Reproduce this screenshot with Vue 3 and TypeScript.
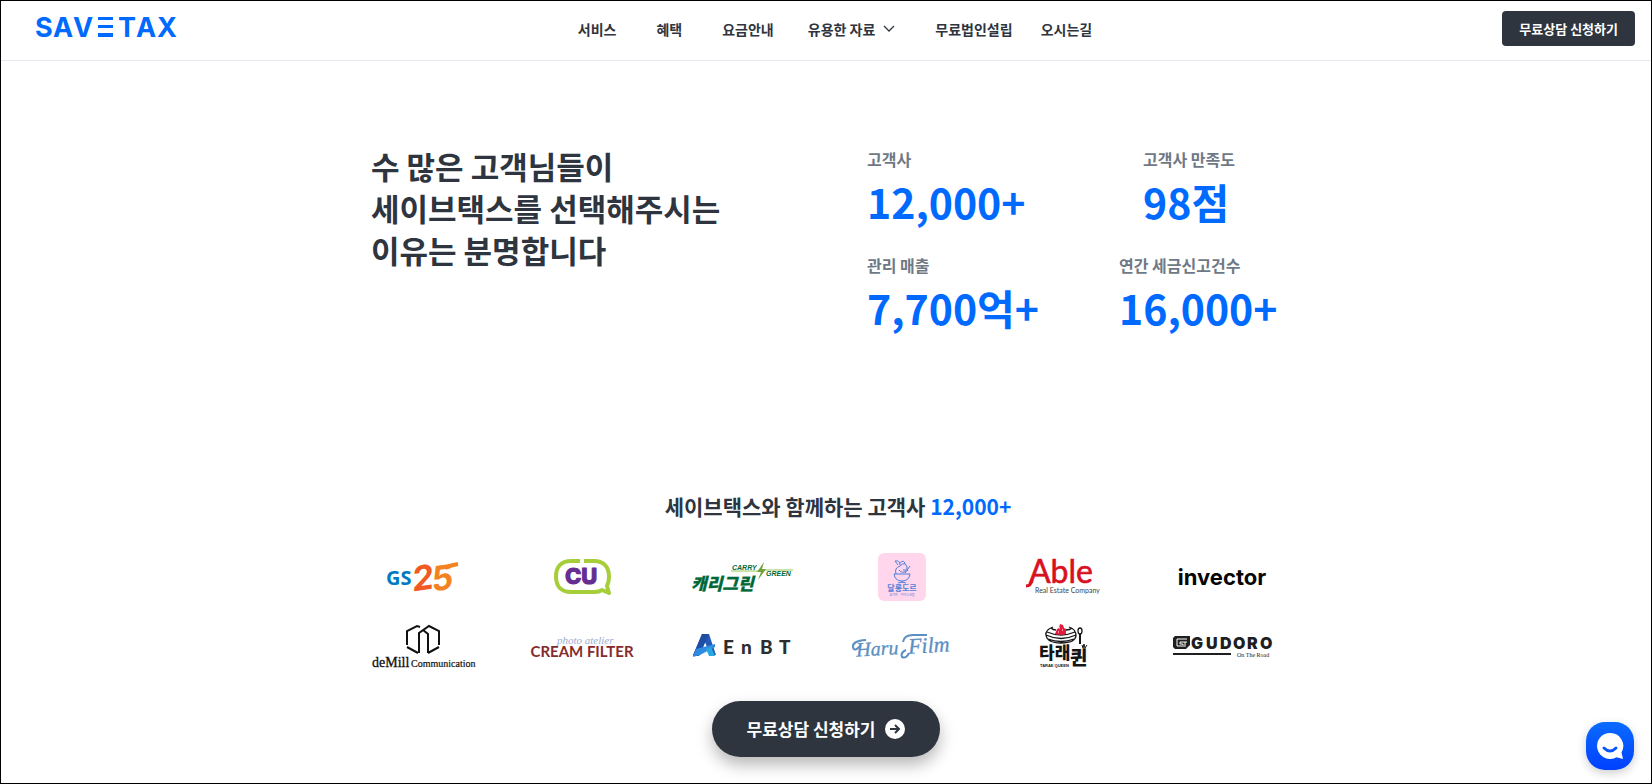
<script setup lang="ts">
interface NavItem {
  label: string
  slot: string
  hasMenu?: boolean
}

interface Stat {
  label: string
  value: string
}

const navItems: NavItem[] = [
  { label: '서비스', slot: 'wide' },
  { label: '혜택', slot: 'wide' },
  { label: '요금안내', slot: 'mid' },
  { label: '유용한 자료', slot: 'wide', hasMenu: true },
  { label: '무료법인설립', slot: 'narrow' },
  { label: '오시는길', slot: 'last' },
]

const statRows: Stat[][] = [
  [
    { label: '고객사', value: '12,000+' },
    { label: '고객사 만족도', value: '98점' },
  ],
  [
    { label: '관리 매출', value: '7,700억+' },
    { label: '연간 세금신고건수', value: '16,000+' },
  ],
]
</script>

<template>
  <div class="page">
    <header class="header">
      <a class="brand" href="#" aria-label="SAVETAX">
        <svg width="148" height="36" viewBox="0 0 148 36">
          <g fill="#006aff">
            <text class="brand-text" y="28" x="0 18 38">SAV</text>
            <path d="M63 8h15v3H63zM63 16h15v3H63zM63 24h15v4H63z" />
            <text class="brand-text" y="28" x="83 101 122">TAX</text>
          </g>
        </svg>
      </a>
      <nav class="nav">
        <a v-for="item in navItems" :key="item.label" href="#" :class="['nav-link', item.slot]">
          {{ item.label }}
          <svg v-if="item.hasMenu" width="12" height="8" viewBox="0 0 12 8">
            <path d="M1 1l5 5 5-5" fill="none" stroke="#2e3640" stroke-width="1.3" />
          </svg>
        </a>
      </nav>
      <button class="header-cta" type="button">무료상담 신청하기</button>
    </header>

    <main class="main">
      <section class="hero">
        <h1>수 많은 고객님들이<br />세이브택스를 선택해주시는<br />이유는 분명합니다</h1>
        <div class="stats">
          <dl v-for="(row, i) in statRows" :key="i" class="stat-row" :class="{ inset: i === 0 }">
            <div v-for="stat in row" :key="stat.label" class="stat">
              <dt>{{ stat.label }}</dt>
              <dd>{{ stat.value }}</dd>
            </div>
          </dl>
        </div>
      </section>

      <section class="clients">
        <h2>세이브택스와 함께하는 고객사 <em>12,000+</em></h2>
        <div class="logos">
          <svg viewBox="0 0 102 48" role="img" aria-label="GS25">
            <text x="15" y="32" class="open" font-size="20" font-weight="700" fill="#007ac2">GS</text>
            <g transform="rotate(-8 65 24)" class="inter" font-weight="700" font-style="italic">
              <text x="41" y="35" font-size="34" fill="#f15a22">2</text>
              <text x="60" y="38" font-size="34" fill="#f58220">5</text>
            </g>
            <path d="M74 15q6-3 13-4" fill="none" stroke="#f58220" stroke-width="4" />
          </svg>

          <svg viewBox="0 0 102 48" role="img" aria-label="CU">
            <path d="M49 8H40C30 8 25 14 25 23.500S30 39 40 39h24q4 0 7-2l7 3-2-7q2-4 2-9C78 14 73 8 63 8H53" fill="none" stroke="#a6ce39" stroke-width="4" stroke-linejoin="round" />
            <text x="34" y="31" class="inter" font-size="22" font-weight="800" fill="#652d90" stroke="#652d90" stroke-linejoin="round">CU</text>
          </svg>

          <svg viewBox="0 0 102 48" role="img" aria-label="캐리그린 CARRY GREEN">
            <path d="M40 18h30M73 17h29" stroke="#9cc657" />
            <g fill="#006838" font-style="italic" font-weight="900">
              <text x="0" y="37" class="kr" font-size="17" stroke="#006838" stroke-width="0.3">캐리그린</text>
              <text x="41" y="17" class="arial" font-size="7">CARRY</text>
              <text x="75" y="23" class="arial" font-size="7">GREEN</text>
            </g>
            <path d="M73 9l-7 10h4l-3 8 8-11h-4z" fill="#6fa03c" />
          </svg>

          <svg viewBox="0 0 102 48" role="img" aria-label="달롱도르">
            <rect x="27" width="48" height="48" rx="6" fill="#ffd6ec" />
            <g fill="none" stroke="#4f7fd8">
              <path d="M43 21h16q-1 7-8 7t-8-7zM51 28v2M47 30q4-2 8 0M45 21q-2-6 4-8 5-5 7 1-1 3 1 4M52 17h3M54 20l5-7M47 12l-3-4q5-1 5 4M49 10q4-4 5 1M48 17q3 4 7 1" />
            </g>
            <text x="51" y="38" text-anchor="middle" class="kr" font-size="8" font-weight="700" fill="#4f7fd8">달롱도르</text>
            <text x="51" y="43" text-anchor="middle" class="kr" font-size="3" fill="#4f7fd8">요거트 · 아이스크림</text>
          </svg>

          <svg viewBox="0 0 102 48" role="img" aria-label="Able Real Estate Company">
            <path d="M21 27q-1 6-6 6" fill="none" stroke="#d9101e" stroke-width="3" />
            <text x="18" y="30" class="lato" font-size="32" stroke="#d9101e" stroke-width="0.6" fill="#d9101e">Able</text>
            <text x="24" y="40" class="lato" font-size="7" fill="#444">Real Estate Company</text>
          </svg>

          <svg viewBox="0 0 102 48" role="img" aria-label="invector">
            <text x="51" y="32" text-anchor="middle" class="inter" font-size="22" font-weight="700" fill="#050505">invector</text>
          </svg>

          <svg viewBox="0 0 102 48" role="img" aria-label="deMill Communication">
            <path d="M36 23V9l10-5 3 1M48 31V11l10-7 10 5v14M57 31V12l-5-4M36 25l11 6M57 31l11-6" fill="none" stroke="#111" stroke-width="2" />
            <g class="serif" fill="#111" stroke="#111">
              <text x="1" y="45" font-size="14" stroke-width="0.3">deMill</text>
              <text x="40" y="45" font-size="10" stroke-width="0.2">Communication</text>
            </g>
          </svg>

          <svg viewBox="0 0 102 48" role="img" aria-label="photo atelier CREAM FILTER">
            <text x="26" y="22" class="script" font-size="11" fill="#9daed6">photo atelier</text>
            <text x="51" y="35" text-anchor="middle" class="lato" font-size="15" font-weight="700" fill="#852b2d">CREAM FILTER</text>
          </svg>

          <svg viewBox="0 0 102 48" role="img" aria-label="EnBT">
            <path d="M11 12h7l7 21h-6l-5-13-5 13H2z" fill="#2459b8" />
            <path d="M11 12h7L8 34H2z" fill="#1d4ea4" />
            <path d="M2 35l3-8 19-5v3l-15 8z" fill="#2f8be0" />
            <path d="M15 27l5-2 4 9h-6z" fill="#25a9e0" />
            <text x="32 50 69 88" y="32" class="lato" font-size="19" font-weight="900" fill="#2d2d2d">EnBT</text>
          </svg>

          <svg viewBox="0 0 102 48" role="img" aria-label="Haru Film">
            <g class="script" fill="#5c8fc2" stroke="#5c8fc2" stroke-width="0.3" transform="rotate(-3 51 24)">
              <text x="5" y="32" font-size="20">Haru</text>
              <text x="57" y="32" font-size="22">Film</text>
            </g>
            <path d="M15 18Q1 19 2 25t8-2M52 20q1-7 10-7h14M58 31q-3 6-7 4-2-4 4-7" fill="none" stroke="#5c8fc2" stroke-width="2" />
          </svg>

          <svg viewBox="0 0 102 48" role="img" aria-label="타래퀸 TARAE QUEEN">
            <g fill="none" stroke="#151515" stroke-width="1.300">
              <path d="M42 5Q34 8 35 13q1 8 15 8t15-7q0-7-7-9M36 10q14 6 28 0M35 13q15 7 30 0M37 17q13 5 26 0M40 6q2 2 5 2M55 8q4 0 6-2" />
              <ellipse cx="69" cy="9" rx="2" ry="3" />
              <path d="M69 12v10" stroke-width="2" />
            </g>
            <path d="M44 12l2-5 2-1 1-4 3 1 1 3 2 1v5q-6 2-11 0z" fill="#e31b3c" />
            <path d="M48 6h1M51 8h1M47 10h1" stroke="#fff" />
            <path d="M71 23l1 3 1-4 1 4 2-3" fill="none" stroke="#151515" />
            <g class="kr" fill="#151515" font-weight="900">
              <text x="28" y="37" font-size="17">타래</text>
              <text x="59" y="43" font-size="19">퀸</text>
            </g>
            <text x="29" y="45" class="arial" font-size="4" fill="#151515" font-weight="700">TARAE QUEEN</text>
          </svg>

          <svg viewBox="0 0 102 48" role="img" aria-label="GUDORO On The Road">
            <path d="M4 14h15v9l-4 4H4l-2-2v-9z" fill="#1f1f1f" />
            <path d="M16 17H6v7h5M16 20H9v2h3v3M14 20v5" fill="none" stroke="#fff" />
            <text x="20 35 49 62 76 89" y="27" class="inter" font-size="16" font-weight="900" fill="#1f1f1f">GUDORO</text>
            <path d="M2 32h58" stroke="#1f1f1f" stroke-width="2" />
            <text x="66" y="35" class="serif" font-size="6" fill="#1f1f1f">On The Road</text>
          </svg>
        </div>
      </section>

      <button class="cta" type="button">
        무료상담 신청하기
        <svg width="20" height="20" viewBox="0 0 20 20">
          <circle cx="10" cy="10" r="10" fill="#fff" />
          <path d="M5 10h9M10 6l4 4-4 4" fill="none" stroke="#2e343e" stroke-width="2" />
        </svg>
      </button>
    </main>

    <button class="chat" type="button" aria-label="채팅 상담">
      <svg width="28" height="28" viewBox="0 0 28 28">
        <path d="M14 1a13 13 0 1 0 6.500 24.300L27 27l-1.500-6.500A13 13 0 0 0 14 1z" fill="#fff" />
        <path d="M8 16q6 6 12 0" fill="none" stroke="#0a55ff" stroke-width="3" stroke-linecap="round" />
      </svg>
    </button>
  </div>
</template>

<style>
body {
  margin: 0;
}
</style>

<style scoped>
.page {
  box-sizing: border-box;
  min-height: 100vh;
  border: 1px solid #000;
  background: #fff;
  color: #2e353f;
  font-family: "Noto Sans CJK KR", sans-serif;
}
button {
  border: 0;
  padding: 0;
  font: inherit;
  cursor: pointer;
}
.header {
  box-sizing: border-box;
  display: grid;
  grid-template-columns: 1fr auto 1fr;
  align-items: center;
  height: 60px;
  padding: 0 16px 4px 34px;
  border-bottom: 1px solid #e6e7ef;
}
.brand {
  display: flex;
  padding-bottom: 4px;
}
.brand-text {
  font-family: Inter, sans-serif;
  font-size: 27px;
  font-weight: 700;
}
.nav {
  display: flex;
  align-items: center;
}
.nav-link {
  display: flex;
  align-items: center;
  gap: 8px;
  color: #2e353f;
  font-size: 14px;
  font-weight: 700;
  line-height: 24px;
  text-decoration: none;
}
.wide {
  margin-right: 40px;
}
.mid {
  margin-right: 34px;
}
.narrow {
  margin-right: 28px;
}
.header-cta {
  justify-self: end;
  padding: 0 17px;
  border-radius: 4px;
  background: #2e353f;
  color: #fff;
  font-size: 13px;
  font-weight: 700;
  line-height: 35px;
}
.main {
  display: flex;
  flex-direction: column;
  align-items: center;
  max-width: 910px;
  margin: 0 auto;
  padding: 84px 16px 20px;
}
.hero {
  display: flex;
  align-self: stretch;
  justify-content: space-between;
  gap: 32px;
}
h1 {
  margin: 0;
  font-size: 31px;
  font-weight: 700;
  line-height: 42px;
}
.stats {
  display: flex;
  flex-direction: column;
  gap: 22px;
  width: 414px;
  padding-top: 2px;
}
.stat-row {
  display: grid;
  grid-template-columns: 252px auto;
  margin: 0;
}
.inset {
  grid-template-columns: 276px auto;
}
dt {
  color: #6f7985;
  font-size: 16px;
  font-weight: 700;
  line-height: 24px;
}
dd {
  margin: 0;
  color: #006aff;
  font-size: 41px;
  font-weight: 700;
  line-height: 60px;
}
.clients {
  align-self: stretch;
  padding-top: 153px;
}
h2 {
  margin: 0;
  padding-left: 24px;
  font-size: 21px;
  font-weight: 700;
  line-height: 32px;
  text-align: center;
}
h2 em {
  color: #006aff;
  font-style: normal;
}
.logos {
  display: grid;
  grid-template-columns: repeat(6, 102px);
  gap: 21px 58px;
  padding-top: 31px;
}
.logos svg {
  display: block;
  height: 48px;
  overflow: visible;
}
.kr {
  font-family: "Noto Sans CJK KR", sans-serif;
}
.open {
  font-family: "Open Sans", sans-serif;
}
.lato {
  font-family: Lato, sans-serif;
}
.inter {
  font-family: Inter, sans-serif;
}
.arial {
  font-family: "Liberation Sans", sans-serif;
}
.serif {
  font-family: "Liberation Serif", serif;
}
.script {
  font-family: "Liberation Serif", serif;
  font-style: italic;
}
.cta {
  display: flex;
  align-items: center;
  gap: 10px;
  margin-top: 31px;
  padding: 0 35px;
  border-radius: 28px;
  background: #2e353f;
  box-shadow: 0 8px 16px rgba(0, 0, 0, 0.28);
  color: #fff;
  font-size: 17px;
  font-weight: 700;
  line-height: 56px;
}
.chat {
  position: fixed;
  right: 18px;
  bottom: 14px;
  display: grid;
  place-items: center;
  width: 48px;
  height: 48px;
  border-radius: 19px;
  background: linear-gradient(#0a6bff, #0040ff);
  box-shadow: 0 3px 10px rgba(0, 0, 0, 0.2);
}
</style>
